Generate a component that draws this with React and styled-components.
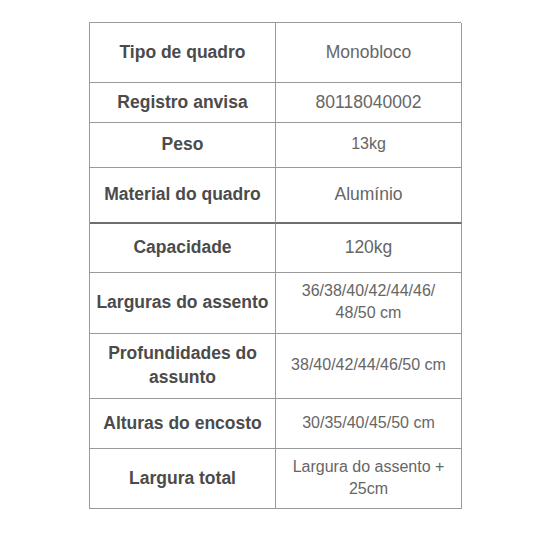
import React from "react";
import styled, { createGlobalStyle } from "styled-components";

const GlobalStyle = createGlobalStyle`
	html, body {
		margin: 0;
		padding: 0;
		background: #fff;
	}
	body {
		font-family: "Liberation Sans", Arial, sans-serif;
	}
`;

// --------------------------------------------------

const Page = styled.div`
	width: 550px;
	height: 550px;
	padding-top: 22px;
	box-sizing: border-box;
	display: flex;
	justify-content: center;
	align-items: flex-start;
`;

const Table = styled.div`
	width: 372px;
	display: grid;
	grid-template-columns: 186px 186px;
	border-top: 1px solid #9a9a9a;
	border-left: 1px solid #9a9a9a;
	box-sizing: border-box;
`;

const Cell = styled.div`
	height: ${ p => p.h }px;
	box-sizing: border-box;
	border-right: 1px solid #9a9a9a;
	border-bottom: ${ p => p.thick ? "2px solid #6e6e6e" : "1px solid #9a9a9a" };
	display: flex;
	align-items: center;
	justify-content: center;
	text-align: center;
	padding: 0 6px 2px;
`;

const Label = styled(Cell)`
	font-weight: bold;
	font-size: 17.5px;
	line-height: 24px;
	color: #4b4b4b;
`;

const Value = styled(Cell)`
	font-size: ${ p => p.big ? "17.5px" : "16px" };
	line-height: 22px;
	color: #666;
`;

// --------------------------------------------------

const rows = [
	{ label: "Tipo de quadro", value: "Monobloco", h: 60, big: true },
	{ label: "Registro anvisa", value: "80118040002", h: 40, big: true },
	{ label: "Peso", value: "13kg", h: 45 },
	{ label: "Material do quadro", value: "Alumínio", h: 56, thick: true, big: true },
	{ label: "Capacidade", value: "120kg", h: 49, big: true },
	{ label: "Larguras do assento", value: <>36/38/40/42/44/46/<br />48/50 cm</>, h: 61 },
	{ label: "Profundidades do assunto", value: "38/40/42/44/46/50 cm", h: 65 },
	{ label: "Alturas do encosto", value: "30/35/40/45/50 cm", h: 50 },
	{ label: "Largura total", value: "Largura do assento + 25cm", h: 60 },
];

export default function App() {
	return (
		<>
			<GlobalStyle />
			<Page>
				<Table>
					{ rows.map((r, i) =>
						<React.Fragment key = { i }>
							<Label h = { r.h } thick = { r.thick }>{ r.label }</Label>
							<Value h = { r.h } thick = { r.thick } big = { r.big }>{ r.value }</Value>
						</React.Fragment>
					) }
				</Table>
			</Page>
		</>
	);
}
